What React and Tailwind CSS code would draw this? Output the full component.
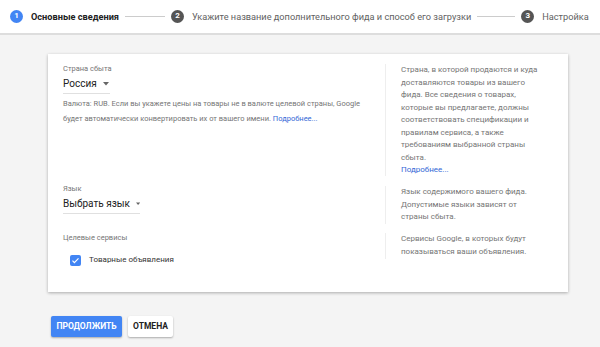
import React from "react";

const Step = ({ n, label, active }) => (
  <div className="flex items-center gap-[8px] shrink-0">
    <span
      className={`w-[13px] h-[13px] rounded-full flex items-center justify-center text-white text-[8px] font-bold ${
        active ? "bg-[#4285f4]" : "bg-[#555555]"
      }`}
    >
      {n}
    </span>
    <span
      className={`text-[9.2px] whitespace-nowrap ${
        active ? "font-bold text-[#212121]" : "text-[#616161]"
      }`}
    >
      {label}
    </span>
  </div>
);

const Line = ({ w }) => <div className={`h-px bg-[#cccccc] ${w}`} />;

const Caret = () => (
  <svg width="6" height="3.5" viewBox="0 0 7 4" className="ml-[6px]">
    <path d="M0 0 L7 0 L3.5 4 Z" fill="#666" />
  </svg>
);

const Row = ({ left, right, className }) => (
  <div className={`flex ${className}`}>
    <div className="flex-1 pl-[15px]">{left}</div>
    <div className="w-[183px] flex">
      <div className="border-l border-[#eeeeee] pl-[15px] pr-[26px] text-[8px] leading-[12.5px] text-[#757575]">
        {right}
      </div>
    </div>
  </div>
);

export default function App() {
  return (
    <div className="w-[600px] h-[347px] bg-[#f4f4f4] font-['Roboto',sans-serif] overflow-hidden">
      <div className="h-[35px] bg-white border-b-2 border-[#dddddd] flex items-center pl-[10px] gap-[6px]">
        <Step n="1" label="Основные сведения" active />
        <Line w="w-[40px]" />
        <Step n="2" label="Укажите название дополнительного фида и способ его загрузки" />
        <Line w="w-[38px]" />
        <Step n="3" label="Настройка" />
      </div>

      <div className="ml-[48px] mt-[19px] w-[520px] bg-white shadow-[0_1px_3px_rgba(0,0,0,0.3)] pt-[10px] pb-[33px]">
        <Row
          className="h-[112px]"
          left={
            <div className="flex flex-col">
              <span className="text-[7.5px] leading-[10px] text-[#757575]">Страна сбыта</span>
              <div className="mt-[3px] w-[47px] border-b border-[#e0e0e0] pb-[2px] flex items-center">
                <span className="text-[10px] leading-[14px] text-[#212121]">Россия</span>
                <Caret />
              </div>
              <p className="mt-[2px] w-[300px] text-[7.5px] leading-[15px] text-[#757575]">
                Валюта: RUB. Если вы укажете цены на товары не в валюте целевой страны, Google
                будет автоматически конвертировать их от вашего имени.{" "}
                <span className="text-[#3367d6]">Подробнее...</span>
              </p>
            </div>
          }
          right={
            <>
              Страна, в которой продаются и куда доставляются товары из вашего фида. Все сведения
              о товарах, которые вы предлагаете, должны соответствовать спецификации и правилам
              сервиса, а также требованиям выбранной страны сбыта.
              <br />
              <span className="text-[#3367d6]">Подробнее...</span>
            </>
          }
        />
        <Row
          className="mt-[10px] h-[38px]"
          left={
            <div className="flex flex-col">
              <span className="text-[7.5px] leading-[10px] text-[#757575] -mt-[2px]">Язык</span>
              <div className="mt-[3px] w-[77px] border-b border-[#e0e0e0] pb-[2px] flex items-center">
                <span className="text-[10px] leading-[14px] text-[#212121] whitespace-nowrap">
                  Выбрать язык
                </span>
                <Caret />
              </div>
            </div>
          }
          right={<>Язык содержимого вашего фида. Допустимые языки зависят от страны сбыта.</>}
        />
        <Row
          className="mt-[9px] h-[26px]"
          left={
            <div className="flex flex-col">
              <span className="text-[7.5px] leading-[10px] text-[#757575]">Целевые сервисы</span>
              <div className="mt-[11px] ml-[7px] flex items-center gap-[8px]">
                <span className="w-[11px] h-[11px] rounded-[2px] bg-[#4285f4] flex items-center justify-center">
                  <svg width="9" height="9" viewBox="0 0 24 24">
                    <path d="M4 12.5l5 5L20 6.5" stroke="white" strokeWidth="3.2" fill="none" />
                  </svg>
                </span>
                <span className="text-[8px] text-[#333333]">Товарные объявления</span>
              </div>
            </div>
          }
          right={<>Сервисы Google, в которых будут показываться ваши объявления.</>}
        />
      </div>

      <div className="ml-[51px] mt-[24px] flex gap-[6px]">
        <button className="h-[21px] w-[71px] bg-[#4285f4] text-white text-[8.5px] font-bold rounded-[2px] shadow-[0_1px_2px_rgba(0,0,0,0.3)]">
          ПРОДОЛЖИТЬ
        </button>
        <button className="h-[21px] w-[45px] bg-white text-[#212121] text-[8.5px] font-bold rounded-[2px] shadow-[0_1px_2px_rgba(0,0,0,0.3)]">
          ОТМЕНА
        </button>
      </div>
    </div>
  );
}
